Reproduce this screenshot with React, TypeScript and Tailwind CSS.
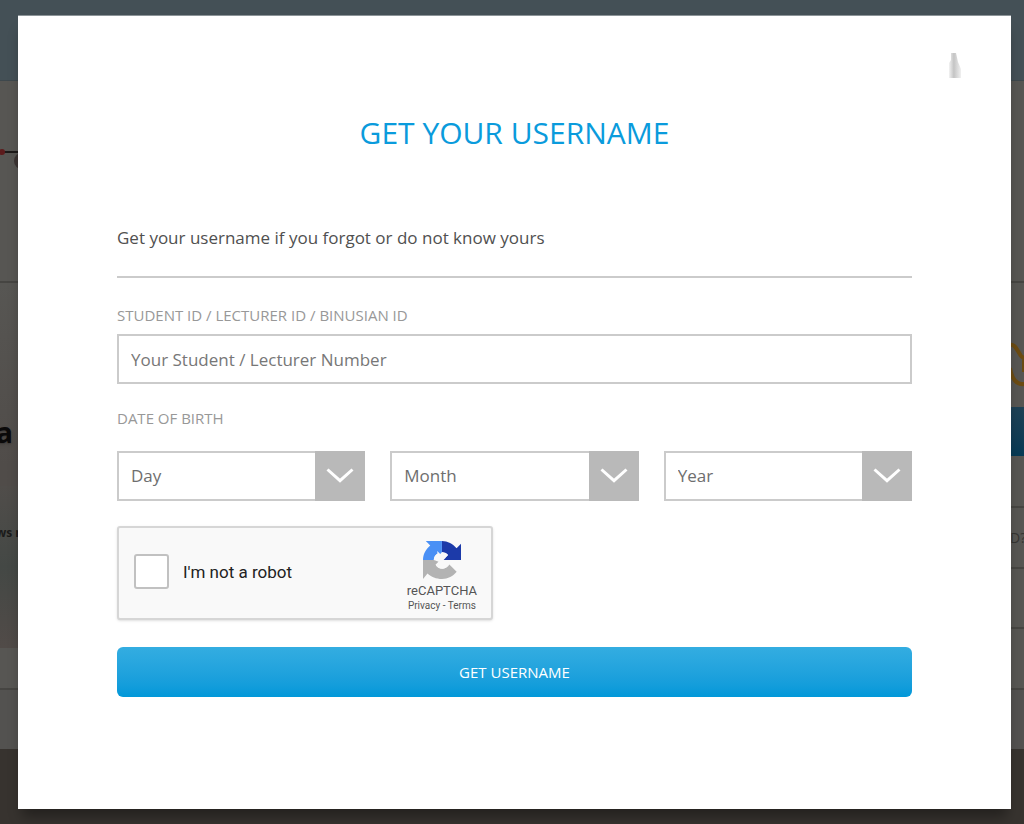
import { useState } from "react";

const selects = [
  { id: "day", label: "Day", count: 31, start: 1 },
  { id: "month", label: "Month", count: 12, start: 1 },
  { id: "year", label: "Year", count: 60, start: 1950 },
];

function DateSelect({ id, label, count, start }: { id: string; label: string; count: number; start: number }) {
  return (
    <div className="relative flex-1">
      <select
        id={id}
        aria-label={label}
        defaultValue=""
        className="block w-full h-[50px] appearance-none border-2 border-[#cbcbcb] bg-white pl-3 pr-14 text-[17px] text-[#6e6e6e]"
      >
        <option value="">{label}</option>
        {Array.from({ length: count }, (_, i) => (
          <option key={i} value={start + i}>
            {start + i}
          </option>
        ))}
      </select>
      <span className="pointer-events-none absolute right-0 top-0 flex h-[50px] w-[50px] items-center justify-center bg-[#b9b9b9]">
        <svg width="28" height="18" viewBox="0 0 28 18" fill="none" stroke="#fff" strokeWidth="3">
          <path d="M1.500 2.500 L14 13.700 L26.500 2.500" />
        </svg>
      </span>
    </div>
  );
}

function RecaptchaLogo() {
  return (
    <svg width="38" height="38" viewBox="0 0 64 64">
      <path fill="#1c3aa9" d="M64 31.900v-27.300l-7.500 7.600C50.400 4.800 41.600 0 32 0v18.500c4.700 0 8.300 1.900 10.700 5.100l-8 8.300z" />
      <path fill="#4a90f5" d="M31.900 0H4.700l7.500 7.500C4.800 13.600 0 22.300 0 32h18c.5-5 2.500-8.500 6-10.700l7.900 8z" />
      <path fill="#b3b3b3" d="M0 32v32l7.600-9.300C13.700 60.200 22.400 64 32.100 64 42 64 50.800 59.300 56.700 51.900L44.400 39.500c-2.400 4.200-6.400 6.900-11.200 7.100-5.400.200-9.500-2.400-11.900-6.700l8-7.900z" />
      <path fill="#f9f9f9" d="M24 17l5 5 3-3.500c5 0 8 2 10.700 5.100l-5 5 7 4-2 7c-3 5-6 7-10 7-5 0-9-2-11.400-6.700l5-5-8-3c.5-5 2.500-8.500 6-10.700z" />
      <path fill="#1c3aa9" d="M32 18.500c4.700 0 8.300 1.900 10.700 5.100l-8 8.300H64V12L44 14z" />
    </svg>
  );
}

function Recaptcha() {
  const [checked, setChecked] = useState(false);

  return (
    <div className="mt-[25px] flex h-[94px] w-[376px] justify-between rounded-[3px] border-2 border-[#d6d6d6] bg-[#f9f9f9] pl-[15px] pr-[14px] shadow-sm font-['Roboto',sans-serif]">
      <div className="flex items-center gap-[14px] pb-1">
        <input
          id="robot"
          type="checkbox"
          checked={checked}
          onChange={(e) => setChecked(e.target.checked)}
          className="size-[35px] appearance-none rounded-[3px] border-2 border-[#c1c1c1] bg-white checked:bg-[#4285f4]"
        />
        <label htmlFor="robot" className="pt-1 text-[17px] text-[#222]">
          I'm not a robot
        </label>
      </div>
      <div className="flex flex-col items-center pt-[13px] text-[#555]">
        <RecaptchaLogo />
        <span className="mt-[3px] text-[13px] leading-[18px]">reCAPTCHA</span>
        <span className="text-[10px] leading-3">
          <a href="#privacy">Privacy</a> - <a href="#terms">Terms</a>
        </span>
      </div>
    </div>
  );
}

// The darkened page under the dialog
function Backdrop() {
  return (
    <div aria-hidden="true" className="col-start-1 row-start-1 flex flex-col overflow-hidden bg-[#37332f]">
      <div className="h-[81px] border-b border-[#3e484d] bg-[#445056]" />
      <div className="flex h-[668px] justify-between bg-[#575653]">
        <div className="flex w-[18px] flex-col overflow-hidden">
          <div className="h-[202px] border-b-2 border-[#464542] pt-[64px]">
            <svg width="18" height="34" viewBox="0 0 18 34">
              <circle cx="22" cy="16" r="8" fill="#3b3433" />
              <path d="M0 7H18" stroke="#1d1a19" strokeWidth="2" />
              <circle cx="2" cy="7" r="3" fill="#5c1b1c" />
            </svg>
          </div>
          <div className="flex h-[365px] flex-col bg-linear-to-b from-[#575653] via-[#504c49] to-[#514c49]">
            <div className="-ml-1 mt-[131px] text-[28px] leading-[36px] font-bold text-[#0b0a0a] text-shadow-md">a</div>
            <div className="mt-[36px] flex h-[162px] flex-col bg-linear-to-b from-[#504d4a] via-[#444845] to-[#514b48] pt-[39px]">
              <span className="-ml-1 whitespace-nowrap text-xs leading-4 font-bold text-[#1b1b1a]">ws n</span>
            </div>
          </div>
          <div className="h-[42px] border-b-2 border-[#464542]" />
          <div className="flex-1 bg-[#535250]" />
        </div>
        <div className="flex w-[14px] flex-col overflow-hidden">
          <div className="h-[202px] border-b-2 border-[#464542]" />
          <div className="h-[225px] border-b-2 border-[#464542] pt-[59px]">
            <svg width="14" height="46" viewBox="0 0 14 46" fill="none" stroke="#6b4b13" strokeWidth="4">
              <path d="M-1 3 C5 1 7 8 11 14 L16 18 M14 18 V30 M0 26 C2 38 7 43 15 42" />
            </svg>
            <div className="mt-[19px] h-[49px] bg-linear-to-b from-[#1e4155] to-[#063a55]" />
          </div>
          <div className="h-[61px] border-b-2 border-[#464542] pt-5 text-sm text-[#353432]">D?</div>
          <div className="h-[60px] border-b-2 border-[#464542]" />
          <div className="h-[61px] border-b-2 border-[#464542]" />
          <div className="flex-1 bg-[#535150]" />
        </div>
      </div>
    </div>
  );
}

export default function App() {
  return (
    <div className="grid min-h-screen font-['Open_Sans',sans-serif]">
      <Backdrop />
      <main
        role="dialog"
        aria-labelledby="dialog-title"
        className="z-10 col-start-1 row-start-1 mb-[15px] ml-[18px] mr-[13px] mt-[15px] border-t border-[#8c9498] bg-white px-[99px] pt-[37px] shadow-[0_12px_12px_-4px_rgba(0,0,0,0.35)]"
      >
        <button type="button" aria-label="Close" className="-mr-[51px] ml-auto block">
          <svg width="14" height="25" viewBox="0 0 14 25">
            <defs>
              <linearGradient id="fade" x1="0" x2="1">
                <stop offset="0" stopColor="#f2f2f2" />
                <stop offset=".4" stopColor="#c4c4c4" />
                <stop offset="1" stopColor="#f0f0f0" />
              </linearGradient>
            </defs>
            <path d="M2 0H7L9 9L12 16V25H0V10L2 7Z" fill="url(#fade)" />
          </svg>
        </button>
        <h1 id="dialog-title" className="mt-[35px] text-center text-[30px] leading-10 text-[#0a9bdc]">
          GET YOUR USERNAME
        </h1>
        <p className="mt-[71px] border-b-2 border-[#cbcbcb] pb-6 text-[17px] leading-7 text-[#505050]">
          Get your username if you forgot or do not know yours
        </p>
        <form onSubmit={(e) => e.preventDefault()}>
          <label htmlFor="student-id" className="mt-[27px] block text-[15px] leading-5 text-[#989898]">
            STUDENT ID / LECTURER ID / BINUSIAN ID
          </label>
          <input
            id="student-id"
            type="text"
            placeholder="Your Student / Lecturer Number"
            className="mt-[9px] block h-[50px] w-full border-2 border-[#cbcbcb] px-3 text-[17px] text-[#505050] placeholder:text-[#777]"
          />
          <fieldset>
            <legend className="pt-[24px] text-[15px] leading-5 text-[#989898]">DATE OF BIRTH</legend>
            <div className="mt-[23px] flex gap-[25px]">
              {selects.map((s) => (
                <DateSelect key={s.id} {...s} />
              ))}
            </div>
          </fieldset>
          <Recaptcha />
          <button
            type="submit"
            className="mt-[27px] h-[50px] w-full rounded-md bg-linear-to-b from-[#33ade1] to-[#0098d9] text-[15px] text-white"
          >
            GET USERNAME
          </button>
        </form>
      </main>
    </div>
  );
}
